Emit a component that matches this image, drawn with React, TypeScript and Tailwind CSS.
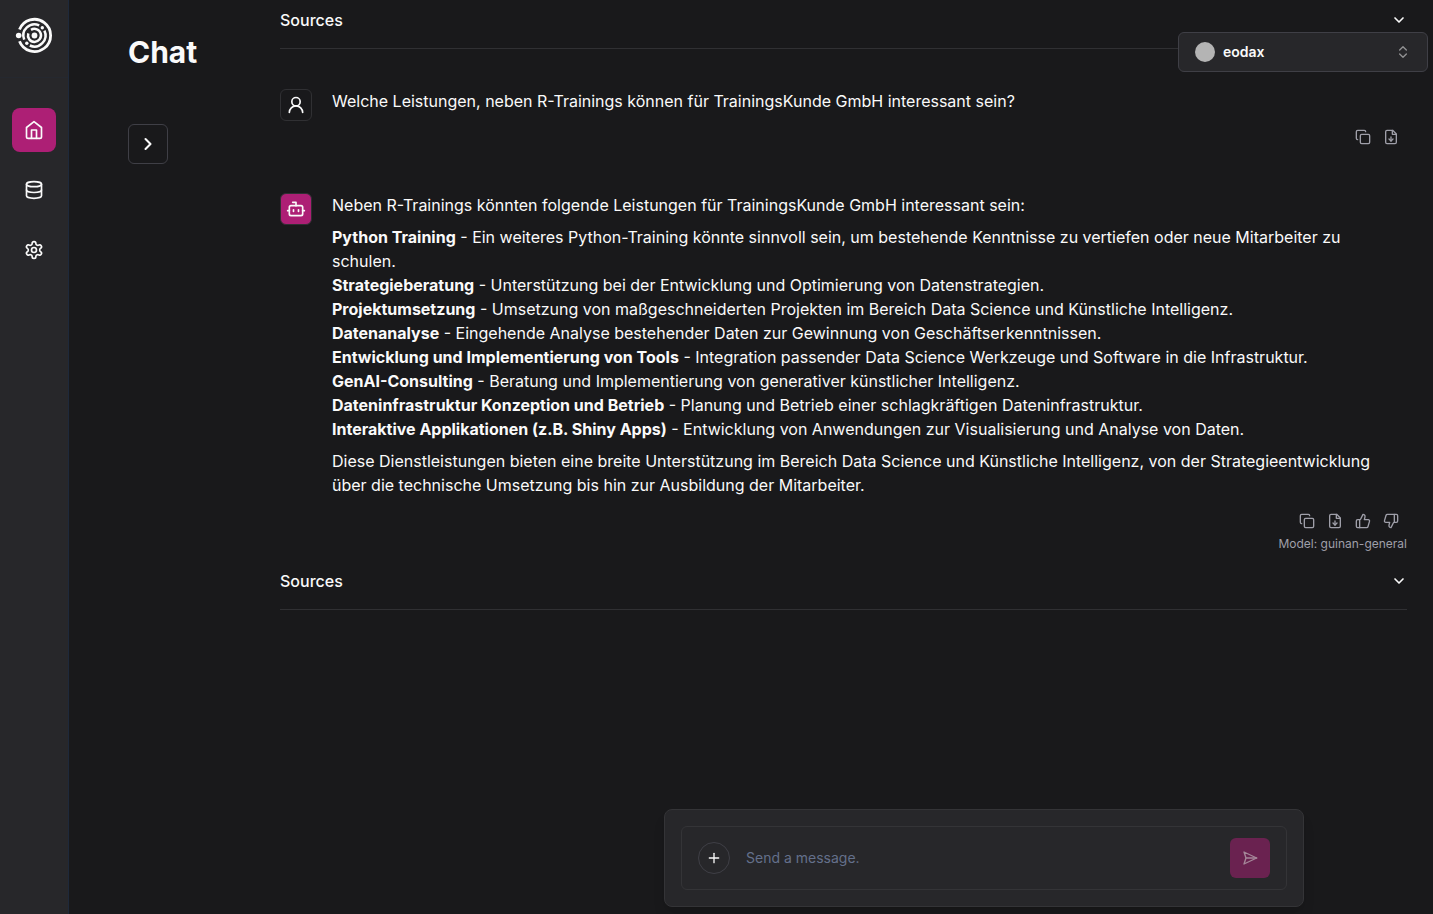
import { ChevronDown, ChevronRight, ChevronsUpDown, Copy, Database, Plus, ThumbsDown, ThumbsUp } from 'lucide-react'
import type { ReactNode } from 'react'

const services = [
  { name: 'Python Training', desc: 'Ein weiteres Python-Training könnte sinnvoll sein, um bestehende Kenntnisse zu vertiefen oder neue Mitarbeiter zu schulen.' },
  { name: 'Strategieberatung', desc: 'Unterstützung bei der Entwicklung und Optimierung von Datenstrategien.' },
  { name: 'Projektumsetzung', desc: 'Umsetzung von maßgeschneiderten Projekten im Bereich Data Science und Künstliche Intelligenz.' },
  { name: 'Datenanalyse', desc: 'Eingehende Analyse bestehender Daten zur Gewinnung von Geschäftserkenntnissen.' },
  { name: 'Entwicklung und Implementierung von Tools', desc: 'Integration passender Data Science Werkzeuge und Software in die Infrastruktur.' },
  { name: 'GenAI-Consulting', desc: 'Beratung und Implementierung von generativer künstlicher Intelligenz.' },
  { name: 'Dateninfrastruktur Konzeption und Betrieb', desc: 'Planung und Betrieb einer schlagkräftigen Dateninfrastruktur.' },
  { name: 'Interaktive Applikationen (z.B. Shiny Apps)', desc: 'Entwicklung von Anwendungen zur Visualisierung und Analyse von Daten.' },
]

function Icon({ size = 16, children }: { size?: number; children: ReactNode }) {
  return (
    <svg width={size} height={size} viewBox="0 0 24 24" fill="none" stroke="currentColor" strokeWidth="2" strokeLinecap="round" strokeLinejoin="round">
      {children}
    </svg>
  )
}

function Logo() {
  return (
    <svg width="38" height="38" viewBox="0 0 38 38" fill="none" stroke="currentColor" strokeWidth="2.5">
      <path d="M4.5 13.6A16.1 16.1 0 1 1 4.5 25.2" strokeWidth="2.8" />
      <path d="M24.2 9.4A11.1 11.1 0 0 0 9.2 23.6" />
      <path d="M14.8 29.5A11.1 11.1 0 0 0 29.4 14.6" />
      <path d="M16 13.9A6.5 6.5 0 1 1 13.3 17.4" />
      <circle cx="19.5" cy="19.5" r="2.9" fill="currentColor" stroke="none" />
      <circle cx="3.7" cy="19.5" r="2.8" fill="currentColor" stroke="none" />
      <circle cx="27.3" cy="11.7" r="1.7" fill="currentColor" stroke="none" />
      <circle cx="11.8" cy="27.3" r="1.7" fill="currentColor" stroke="none" />
    </svg>
  )
}

function NavItem({ label, active, children }: { label: string; active?: boolean; children: ReactNode }) {
  return (
    <a
      href="#"
      aria-label={label}
      className={`flex size-11 items-center justify-center rounded-lg ${active ? 'bg-[#ad1f75]' : ''}`}
    >
      {children}
    </a>
  )
}

function Sources() {
  return (
    <div className="border-b border-[#303033]">
      <button type="button" className="flex w-full items-center justify-between py-4 font-medium">
        Sources
        <ChevronDown className="size-4" strokeWidth={2.5} />
      </button>
    </div>
  )
}

function ActionButton({ label, children }: { label: string; children: ReactNode }) {
  return (
    <button type="button" aria-label={label} className="flex size-7 items-center justify-center">
      {children}
    </button>
  )
}

function FileDownIcon() {
  return (
    <Icon>
      <path d="M14.5 2H6a2 2 0 0 0-2 2v16a2 2 0 0 0 2 2h12a2 2 0 0 0 2-2V7.5L14.5 2z" />
      <path d="M14 2v6h6" />
      <path d="M12 18v-6" />
      <path d="m9 15 3 3 3-3" />
    </Icon>
  )
}

export default function App() {
  return (
    <div className="relative flex min-h-screen bg-[#19191b] font-[Inter,sans-serif] text-base text-zinc-50">
      <nav className="flex w-[69px] shrink-0 flex-col items-center gap-4 border-r border-[#1e293b] bg-[#27272a]">
        <div className="mb-[14px] flex h-[78px] w-full justify-center border-b border-[#25282f] pt-4">
          <a href="#" aria-label="Home">
            <Logo />
          </a>
        </div>
        <NavItem label="Chat" active>
          <Icon size={20}>
            <path d="m3 9 9-7 9 7v11a2 2 0 0 1-2 2H5a2 2 0 0 1-2-2z" />
            <path d="M9 22V12h6v10" />
          </Icon>
        </NavItem>
        <NavItem label="Data">
          <Database className="size-5" />
        </NavItem>
        <NavItem label="Settings">
          <Icon size={20}>
            <path d="M12.22 2h-.44a2 2 0 0 0-2 2v.18a2 2 0 0 1-1 1.73l-.43.25a2 2 0 0 1-2 0l-.15-.08a2 2 0 0 0-2.73.73l-.22.38a2 2 0 0 0 .73 2.73l.15.1a2 2 0 0 1 1 1.72v.51a2 2 0 0 1-1 1.74l-.15.09a2 2 0 0 0-.73 2.73l.22.38a2 2 0 0 0 2.73.73l.15-.08a2 2 0 0 1 2 0l.43.25a2 2 0 0 1 1 1.73V20a2 2 0 0 0 2 2h.44a2 2 0 0 0 2-2v-.18a2 2 0 0 1 1-1.73l.43-.25a2 2 0 0 1 2 0l.15.08a2 2 0 0 0 2.73-.73l.22-.39a2 2 0 0 0-.73-2.73l-.15-.08a2 2 0 0 1-1-1.74v-.5a2 2 0 0 1 1-1.74l.15-.09a2 2 0 0 0 .73-2.73l-.22-.38a2 2 0 0 0-2.73-.73l-.15.08a2 2 0 0 1-2 0l-.43-.25a2 2 0 0 1-1-1.73V4a2 2 0 0 0-2-2z" />
            <circle cx="12" cy="12" r="3" />
          </Icon>
        </NavItem>
      </nav>

      <aside className="w-[211px] shrink-0 pt-[34px] pl-[59px]">
        <h1 className="text-3xl font-bold">Chat</h1>
        <button type="button" aria-label="Show history" className="mt-[54px] flex size-10 items-center justify-center rounded-md border border-[#3f3f46]">
          <ChevronRight className="size-5" strokeWidth={2.5} />
        </button>
      </aside>

      <main className="flex min-w-0 flex-1 flex-col pr-[26px]">
        <div className="-mt-2">
          <Sources />
        </div>

        <section className="mt-10 flex items-start gap-5">
          <div className="flex size-8 shrink-0 items-center justify-center rounded-md border border-[#303033]">
            <Icon size={20}>
              <circle cx="12" cy="8" r="5" />
              <path d="M20 21a8 8 0 0 0-16 0" />
            </Icon>
          </div>
          <p className="min-w-0 flex-1">Welche Leistungen, neben R-Trainings können für TrainingsKunde GmbH interessant sein?</p>
        </section>
        <div className="mt-[2px] flex justify-end pr-[2px] text-zinc-400">
          <ActionButton label="Copy message">
            <Copy className="size-4" />
          </ActionButton>
          <ActionButton label="Download message">
            <FileDownIcon />
          </ActionButton>
        </div>

        <section className="mt-[42px] flex items-start gap-5">
          <div className="flex size-8 shrink-0 items-center justify-center rounded-md border border-[#303033] bg-[#ad1f75]">
            <Icon size={20}>
              <path d="M12 8V4H8" />
              <rect width="16" height="12" x="4" y="8" rx="2" />
              <path d="M2 14h2" />
              <path d="M20 14h2" />
              <path d="M15 13v2" />
              <path d="M9 13v2" />
            </Icon>
          </div>
          <div className="flex min-w-0 flex-1 flex-col gap-2">
            <p>Neben R-Trainings könnten folgende Leistungen für TrainingsKunde GmbH interessant sein:</p>
            <ul>
              {services.map((service) => (
                <li key={service.name}>
                  <strong className="font-bold">{service.name}</strong> - {service.desc}
                </li>
              ))}
            </ul>
            <p>
              Diese Dienstleistungen bieten eine breite Unterstützung im Bereich Data Science und Künstliche Intelligenz, von der Strategieentwicklung
              über die technische Umsetzung bis hin zur Ausbildung der Mitarbeiter.
            </p>
          </div>
        </section>
        <div className="mt-[10px] flex justify-end pr-[2px] text-zinc-400">
          <ActionButton label="Copy answer">
            <Copy className="size-4" />
          </ActionButton>
          <ActionButton label="Download answer">
            <FileDownIcon />
          </ActionButton>
          <ActionButton label="Good answer">
            <ThumbsUp className="size-4" />
          </ActionButton>
          <ActionButton label="Bad answer">
            <ThumbsDown className="size-4" />
          </ActionButton>
        </div>
        <p className="text-right text-xs leading-[18px] text-zinc-400">Model: guinan-general</p>
        <Sources />

        <form className="mt-auto mb-[7px] ml-[281px] w-full max-w-[640px] self-center rounded-lg border border-[#343437] bg-[#27272a] p-4 shadow-lg">
          <div className="flex items-center gap-4 rounded-md border border-[#343437] px-4 py-[11px]">
            <button type="button" aria-label="Add attachment" className="flex size-8 shrink-0 items-center justify-center rounded-full border border-[#3f3f46]">
              <Plus className="size-4" />
            </button>
            <input
              type="text"
              aria-label="Message"
              placeholder="Send a message."
              className="min-w-0 flex-1 bg-transparent text-sm outline-none placeholder:text-[#64708b]"
            />
            <button type="submit" aria-label="Send" className="flex size-10 shrink-0 items-center justify-center rounded-md bg-[#6a2250] text-[#a58799]">
              <Icon>
                <path d="m3 3 3 9-3 9 19-9Z" />
                <path d="M6 12h16" />
              </Icon>
            </button>
          </div>
        </form>
      </main>

      <button
        type="button"
        aria-haspopup="listbox"
        className="absolute top-8 right-[5px] flex h-10 w-[250px] items-center rounded-md border border-[#3f3f46] bg-[#27272a] px-4 text-sm font-semibold"
      >
        <span className="mr-2 size-5 rounded-full bg-[#b4b4b4]" />
        eodax
        <ChevronsUpDown className="ml-auto size-4 opacity-50" />
      </button>
    </div>
  )
}
